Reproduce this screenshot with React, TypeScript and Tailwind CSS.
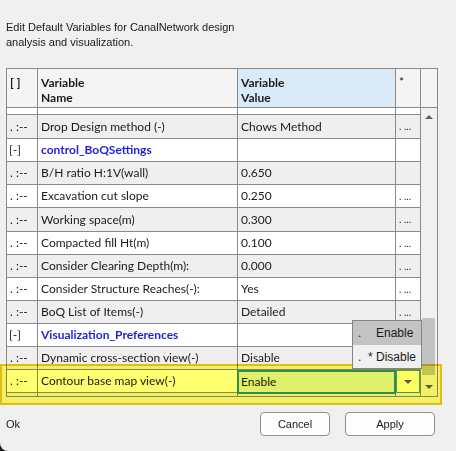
import React from "react";

type Row = {
  c1: string;
  name: string;
  val?: string;
  dots?: boolean;
  group?: boolean;
  gray?: boolean;
  h: string;
};

const rows: Row[] = [
  { c1: ". :--", name: "Drop Design method (-)", val: "Chows Method", dots: true, gray: true, h: "h-[24px]" },
  { c1: "[-]", name: "control_BoQSettings", group: true, h: "h-[23px]" },
  { c1: ". :--", name: "B/H ratio H:1V(wall)", val: "0.650", gray: true, h: "h-[23px]" },
  { c1: ". :--", name: "Excavation cut slope", val: "0.250", dots: true, h: "h-[23px]" },
  { c1: ". :--", name: "Working space(m)", val: "0.300", dots: true, gray: true, h: "h-[24px]" },
  { c1: ". :--", name: "Compacted fill Ht(m)", val: "0.100", dots: true, h: "h-[23px]" },
  { c1: ". :--", name: "Consider Clearing Depth(m):", val: "0.000", dots: true, gray: true, h: "h-[23px]" },
  { c1: ". :--", name: "Consider Structure Reaches(-):", val: "Yes", dots: true, h: "h-[23px]" },
  { c1: ". :--", name: "BoQ List of Items(-)", val: "Detailed", dots: true, gray: true, h: "h-[23px]" },
  { c1: "[-]", name: "Visualization_Preferences", group: true, h: "h-[23px]" },
  { c1: ". :--", name: "Dynamic cross-section view(-)", val: "Disable", gray: true, h: "h-[23px]" },
];

const line = "border-[#8a8a8a]";

function Tri({ up = true, color = "#606060" }: { up?: boolean; color?: string }) {
  return (
    <svg width="8" height="4" viewBox="0 0 8 4">
      <path d={up ? "M0 4 L4 0 L8 4 Z" : "M0 0 L4 4 L8 0 Z"} fill={color} />
    </svg>
  );
}

export default function App() {
  return (
    <div className="w-[456px] h-[451px] bg-[#1e1e1e]">
      <div
        className="relative w-[456px] h-[451px] bg-[#f0f0f0] rounded-bl-[8px] text-[#1a1a1a] flex flex-col"
        style={{ fontFamily: '"Liberation Sans", Arial, sans-serif' }}
      >
        <p className="pt-[20px] pl-[6px] text-[11px] leading-[15px]">
          Edit Default Variables for CanalNetwork design
          <br />
          analysis and visualization.
        </p>

        {/* table */}
        <div
          className={`mt-[18px] ml-[6px] w-[432px] border ${line} flex flex-col text-[12px]`}
          style={{ fontFamily: 'Lato, "Liberation Sans", sans-serif' }}
        >
          {/* header */}
          <div className={`flex h-[39px] border-b ${line} font-bold leading-[15px]`}>
            <div className={`w-[31px] border-r ${line} bg-[#f4f4f4] pl-[3px] pt-[6px]`}>[ ]</div>
            <div className={`w-[200px] border-r ${line} bg-[#f4f4f4] pl-[3px] pt-[6px]`}>
              Variable
              <br />
              Name
            </div>
            <div className={`w-[158px] border-r ${line} bg-[#d9eaf8] pl-[3px] pt-[6px]`}>
              Variable
              <br />
              Value
            </div>
            <div className={`w-[25px] border-r ${line} bg-[#f4f4f4] pl-[3px] pt-[5px] font-normal`}>*</div>
            <div className="w-[16px] bg-[#f4f4f4]" />
          </div>

          {/* body */}
          <div className="flex h-[288px]">
            <div className="w-[414px] flex flex-col">
              {/* partial top row */}
              <div className={`flex h-[7px] border-b ${line} bg-white`}>
                <div className={`w-[31px] border-r ${line}`} />
                <div className={`w-[200px] border-r ${line}`} />
                <div className={`w-[158px] border-r ${line}`} />
                <div className={`w-[25px] border-r ${line}`} />
              </div>

              {rows.map((r, i) => (
                <div
                  key={i}
                  className={`flex ${r.h} border-b ${line} ${r.gray ? "bg-[#efefef]" : "bg-white"}`}
                >
                  <div className={`w-[31px] border-r ${line} flex items-center ${r.group ? "pl-[2px]" : "pl-[3px]"}`}>
                    {r.c1}
                  </div>
                  <div
                    className={`w-[200px] border-r ${line} flex items-center pl-[3px] whitespace-nowrap ${
                      r.group ? "font-bold text-[#1f1fd8]" : ""
                    }`}
                  >
                    {r.name}
                  </div>
                  <div className={`w-[158px] border-r ${line} flex items-center pl-[3px]`}>{r.val}</div>
                  <div className={`w-[25px] border-r ${line} flex items-center pl-[3px] text-[10px]`}>
                    {r.dots ? ". ..." : ""}
                  </div>
                </div>
              ))}

              {/* Contour row with editor */}
              <div className={`flex h-[23px] border-b ${line} bg-white`}>
                <div className={`w-[31px] border-r ${line} flex items-center pl-[3px]`}>. :--</div>
                <div className={`w-[200px] border-r ${line} flex items-center pl-[3px] whitespace-nowrap`}>
                  Contour base map view(-)
                </div>
                <div className={`relative w-[158px] border-r ${line}`}>
                  <div className="absolute left-[-1px] top-0 w-[159px] h-[24px] z-20 bg-[#dff06a] border-2 border-[#2f8e50] flex items-center pl-[2px] text-[#2a1a00]">
                    Enable
                  </div>
                </div>
                <div className={`relative w-[25px] border-r ${line}`}>
                  <div className="absolute left-0 top-0 w-[24px] h-[23px] z-20 bg-[#ffff5f] border border-[#3c9c5c] flex items-center justify-center">
                    <Tri up={false} color="#555" />
                  </div>
                </div>
              </div>

              {/* partial bottom row */}
              <div className="flex h-[3px] bg-[#efefef]">
                <div className={`w-[31px] border-r ${line}`} />
                <div className={`w-[200px] border-r ${line}`} />
                <div className={`w-[158px] border-r ${line}`} />
                <div className={`w-[25px] border-r ${line}`} />
              </div>
            </div>

            {/* scrollbar */}
            <div className="w-[16px] flex flex-col bg-[#f0f0f0]">
              <div className="h-[18px] flex items-center justify-center">
                <Tri up />
              </div>
              <div className="mt-[192px] ml-[1px] w-[13px] h-[57px] bg-[#c2c2c2]" />
              <div className="mt-auto h-[18px] flex items-center justify-center">
                <Tri up={false} />
              </div>
            </div>
          </div>
        </div>

        {/* bottom bar */}
        <div className="mt-[15px] flex items-center justify-between pl-[6px] pr-[21px] text-[11px]">
          <span>Ok</span>
          <div className="flex gap-[15px]">
            <button className="w-[70px] h-[24px] rounded-[4px] border border-[#8f8f8f] bg-[#fdfdfd] text-[11px]">
              Cancel
            </button>
            <button className="w-[90px] h-[24px] rounded-[4px] border border-[#8f8f8f] bg-[#fdfdfd] text-[11px]">
              Apply
            </button>
          </div>
        </div>

        {/* yellow highlight overlay */}
        <div className="pointer-events-none absolute left-0 top-[364px] w-[442px] h-[41px] border-2 border-[#f3c80d] bg-[#ffff70] mix-blend-multiply z-10" />

        {/* dropdown popup */}
        <div className="absolute left-[352px] top-[320px] w-[70px] h-[49px] border border-[#858585] z-30 flex flex-col text-[12px]">
          <div className="h-[24px] bg-[#c3c3c3] flex items-center pl-[5px]">
            <span className="w-[18px]">.</span>
            <span>Enable</span>
          </div>
          <div className="flex-1 bg-[#f0f0f0] flex items-center pl-[5px]">
            <span className="w-[10px]">.</span>
            <span>* Disable</span>
          </div>
        </div>
      </div>
    </div>
  );
}
